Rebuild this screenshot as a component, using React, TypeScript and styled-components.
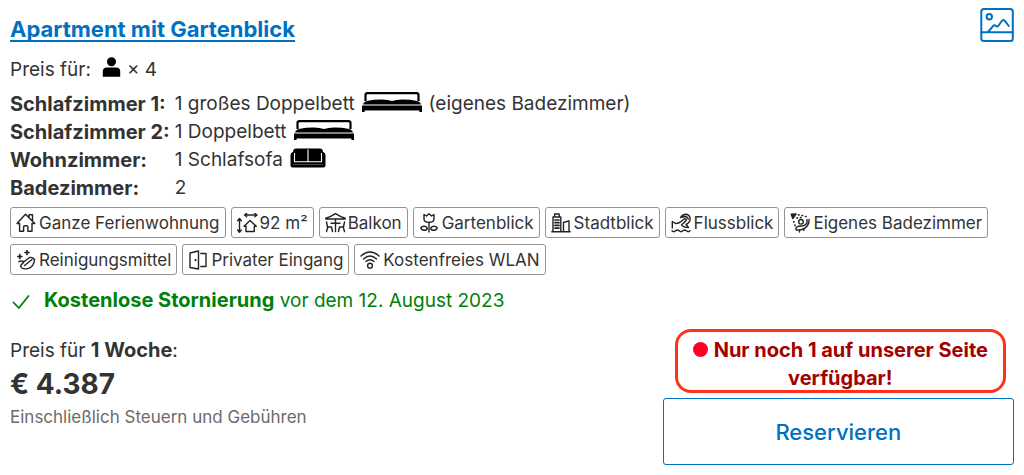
import React from "react";
import styled, { createGlobalStyle } from "styled-components";

const GlobalStyle = createGlobalStyle`
  *, *::before, *::after { box-sizing: border-box; }
  body {
    margin: 0;
    background: #fff;
    color: #333;
    font-family: Inter, "Liberation Sans", sans-serif;
    font-size: 19px;
    line-height: 28px;
  }
  strong { font-size: 20px; line-height: 24px; }
`;

const Card = styled.main`
  padding: 8px 10px;
`;

const Header = styled.header`
  display: flex;
  justify-content: space-between;
  align-items: flex-start;
  height: 42px;
`;

const Title = styled.h1`
  margin: 0;
  padding-top: 5px;
  font-size: 22px;
  line-height: 32px;
  font-weight: 700;
`;

const TitleLink = styled.a`
  color: #0071c2;
  text-decoration: underline;
  text-decoration-thickness: 2px;
  text-underline-offset: 3px;
  text-decoration-skip-ink: none;
`;

const PhotoButton = styled.button`
  display: block;
  padding: 0;
  border: 0;
  background: none;
  cursor: pointer;
  svg { display: block; }
`;

const Occupancy = styled.p`
  display: flex;
  align-items: center;
  margin: 6px 0;
`;

const PersonIcon = styled.svg`
  margin: 0 6px 6px 11px;
`;

const Rooms = styled.table`
  border-collapse: collapse;
  th, td {
    padding: 0;
    height: 28px;
    text-align: left;
    white-space: nowrap;
  }
  th {
    min-width: 164px;
    padding-right: 5px;
    font-size: 20px;
    line-height: 26px;
    font-weight: 700;
  }
`;

const RoomLine = styled.span`
  display: flex;
  align-items: center;
  gap: 7px;
  svg { margin-bottom: 4px; }
`;

const Facilities = styled.ul`
  display: flex;
  flex-wrap: wrap;
  gap: 6px 5px;
  margin: 5px 0 0;
  padding: 0;
  list-style: none;
`;

const Facility = styled.li`
  display: flex;
  align-items: center;
  gap: 2px;
  height: 31px;
  padding: 0 5px;
  border: 1px solid #949494;
  border-radius: 3px;
  font-size: 17px;
  white-space: nowrap;
`;

const LineIcon = styled.svg`
  flex: none;
  fill: none;
  stroke: #222;
  stroke-width: 1.4;
  stroke-linecap: round;
  stroke-linejoin: round;
`;

const Cancellation = styled.p`
  display: flex;
  align-items: center;
  gap: 12px;
  margin: 12px 0 22px;
  color: #008009;
`;

const Footer = styled.footer`
  display: flex;
  justify-content: space-between;
  align-items: flex-start;
`;

const PriceBlock = styled.div`
  p { margin: 0; }
`;

const Price = styled.p`
  font-size: 28px;
  line-height: 38px;
  font-weight: 700;
`;

const TaxNote = styled.p`
  color: #6b6b6b;
  font-size: 17px;
`;

const Booking = styled.div`
  width: 35%;
`;

const Scarcity = styled.p`
  margin: -8px 8px 5px 12px;
  padding: 4px 12px 0;
  height: 64px;
  border: 3px solid #ff3118;
  border-radius: 16px;
  color: #a30000;
  font-size: 20px;
  font-weight: 700;
  text-align: center;
`;

const Dot = styled.span`
  display: inline-block;
  width: 15px;
  height: 15px;
  margin-right: 6px;
  border-radius: 50%;
  background: #ff0028;
`;

const ReserveButton = styled.button`
  display: block;
  width: 100%;
  height: 67px;
  border: 1px solid #0071c2;
  border-radius: 3px;
  background: #fff;
  color: #0071c2;
  font: 500 22px Inter, "Liberation Sans", sans-serif;
  cursor: pointer;
`;

const Bed = () => (
  <svg width="60" height="20" viewBox="0 0 60 20" aria-hidden="true">
    <path d="M3.500 9V3Q3.500 1.200 5.500 1.200H54.500Q56.500 1.200 56.500 3V9" fill="none" stroke="#000" strokeWidth="2.200" />
    <path d="M1 12.600Q1.500 9.500 6 8.700Q12 7.600 19 7.500Q25 7.300 30 9Q35 7.300 41 7.500Q48 7.600 54 8.700Q58.500 9.500 59 12.600Z" />
    <path d="M0 13.600H60V20H57.400V18.400H2.600V20H0Z" />
  </svg>
);

const Sofa = () => (
  <svg width="36" height="20" viewBox="0 0 36 20" aria-hidden="true">
    <path d="M3 4Q3 .5 6 .5H30Q33 .5 33 4Q35.500 4.500 35.500 7V17.500Q35.500 19.500 33.500 19.500H2.500Q.5 19.500 .5 17.500V7Q.5 4.500 3 4Z" />
    <path d="M4.500 5V13.700H31.500V5M18 1.500V13.700" fill="none" stroke="#fff" strokeWidth="1.100" />
    <path d="M3 16.500H33" fill="none" stroke="#777" strokeWidth=".6" />
  </svg>
);

const drawings: Record<string, React.ReactNode> = {
  house: (
    <path d="M1 10.500 9.500 1.300 18.800 10.500M1 10.500H3.600V18.300H7.600V14Q7.600 12.800 8.800 12.800H10.700Q11.900 12.800 11.900 14V18.300H16V10.500H18.800M13 4.500V1.800H16.500V8" />
  ),
  area: (
    <>
      <path d="M8 2H19M9.700.3 7.500 2 9.700 3.700M17.800.3 20 2 17.800 3.700M2.500 6V18.500M.7 7.700 2.500 5.500 4.300 7.700M.7 17 2.500 19.200 4.300 17" />
      <path d="M7 13.300 13 7.500 19.300 13.300H17.300V18.500H9V13.300Z" />
    </>
  ),
  balcony: (
    <path d="M.8 5.200Q5 4.300 10.500.7Q16 4.300 20.200 5.200V6H.8ZM10.500 6V18.500M6 10.200H15M1.500 9 2.500 14H6.500L7.500 18.500M2.800 14 1.500 18.500M19.500 9 18.500 14H14.500L13.500 18.500M18.200 14 19.500 18.500" />
  ),
  flower: (
    <path d="M5 1.500 7.500 3 10 .8 12.500 3 15 1.500V6Q15 9.300 10 9.300Q5 9.300 5 6ZM10 9.300V19M8.300 15.300Q8 17.300 5 17.300Q2.500 17.300 1.800 14.800Q3.500 13 5.500 13.300Q7.500 13.500 8.300 15.300ZM11.700 15.300Q12 17.300 15 17.300Q17.500 17.300 18.200 14.800Q16.500 13 14.500 13.300Q12.500 13.500 11.700 15.300Z" />
  ),
  city: (
    <>
      <path d="M.8 18.800H19.200M2 18.500V4H9.800V18.500M3.600 4V1H8.200V4M12.500 18.500V9.500L18 7.800V18.500" />
      <path d="M4 7H8M4 9.700H8M4 12.400H8M4 15.100H8" strokeWidth="1.700" />
    </>
  ),
  river: (
    <>
      <path d="M1.300 15V8.500L4.500 10.500Q8 10.500 10 8.500L13.500 5.800Q15.500 5.500 15.300 7.300Q13.500 9.500 10.500 11.800Q12.500 14.500 17.500 14.500L15 11.500Q19 9.500 19.200 6Q19 1.800 15 1.300Q11.500 1.300 9.500 4.500L13.500 3.500Q16.500 3.500 17.300 6" />
      <path d="M1 17.800Q2.800 19.500 4.600 17.800T8.200 17.800T11.800 17.800T15.400 17.800T19 17.800" />
    </>
  ),
  bath: (
    <>
      <path d="M1.200 1.300 6 1 2.800 5.500Z" fill="#222" />
      <path d="M8.500 1.800H9M12 2.500H12.500M15.500 3.500H16M3.800 8.500V9M5 12V12.500M7 4.800 7.300 5.100M10.500 4.500H11" strokeWidth="1.700" />
      <circle cx="11" cy="8.800" r="2.300" />
      <path d="M17 6.500V9.500Q15.500 13 11.500 13Q8 13 6.500 14.200Q5.300 15.500 6.200 17H9.500Q14.500 16.500 17.500 12.500Q19.500 9.500 19 6.500M9.500 17V19M13.800 15.800V17.500" />
    </>
  ),
  clean: (
    <>
      <path d="M11 .5V4.500M9 2.500H13M3.800 4.500V8.500M1.800 6.500H5.800" strokeWidth="1.700" />
      <path d="M3 11.500Q7 10.200 7.500 12Q7.500 13.200 5 14.800M7 12.500 13.500 7.500Q16.800 7 18.500 9.500M18.500 9.500Q18 16.500 12.500 18.300Q6.500 20 4.500 16.500Q4.800 14.200 7.500 12.500M8.500 15.500 16 9.500" />
    </>
  ),
  door: (
    <>
      <path d="M2 3 10.500 1V19L2 17.500ZM12.800 3.500H18V16.500H12.800" />
      <path d="M7.500 10.100V10.200" strokeWidth="2" />
    </>
  ),
  wifi: (
    <>
      <path d="M1 6Q10-1.800 19 6M3.500 9Q10 3.200 16.500 9M6 11.500Q10 7.800 14 11.500" />
      <circle cx="10" cy="15.700" r="2.400" />
    </>
  ),
};

const facilities = [
  { icon: "house", label: "Ganze Ferienwohnung" },
  { icon: "area", label: "92 m²" },
  { icon: "balcony", label: "Balkon" },
  { icon: "flower", label: "Gartenblick" },
  { icon: "city", label: "Stadtblick" },
  { icon: "river", label: "Flussblick" },
  { icon: "bath", label: "Eigenes Badezimmer" },
  { icon: "clean", label: "Reinigungsmittel" },
  { icon: "door", label: "Privater Eingang" },
  { icon: "wifi", label: "Kostenfreies WLAN" },
];

const rooms = [
  { name: "Schlafzimmer 1:", text: "1 großes Doppelbett", icon: <Bed />, note: "(eigenes Badezimmer)" },
  { name: "Schlafzimmer 2:", text: "1 Doppelbett", icon: <Bed /> },
  { name: "Wohnzimmer:", text: "1 Schlafsofa", icon: <Sofa /> },
  { name: "Badezimmer:", text: "2" },
];

export default function App() {
  return (
    <>
      <GlobalStyle />
      <Card>
        <Header>
          <Title>
            <TitleLink href="#apartment">Apartment mit Gartenblick</TitleLink>
          </Title>
          <PhotoButton type="button" aria-label="Fotos">
            <svg width="34" height="34" viewBox="0 0 34 34" fill="none" stroke="#0071c2" strokeWidth="2" strokeLinecap="round" strokeLinejoin="round">
              <rect x="1.300" y="1" width="31.500" height="32" rx="2.500" />
              <path d="M1.300 24.300H32.800M8 24 13 18.200Q14.500 16.500 16 18Q17.500 19.300 18.800 17.200L21.500 13.300Q23.500 10.800 25.300 13.300L28.800 18" />
              <circle cx="9.300" cy="8.700" r="2.700" />
            </svg>
          </PhotoButton>
        </Header>

        <Occupancy>
          Preis für:
          <PersonIcon width="19" height="20" viewBox="0 0 19 20" aria-hidden="true">
            <circle cx="9.500" cy="4.700" r="4.500" />
            <path d="M.8 19.800V14.500Q.8 10.500 5 10.500H14Q18.200 10.500 18.200 14.500V19.800Z" />
          </PersonIcon>
          × 4
        </Occupancy>

        <Rooms>
          <tbody>
            {rooms.map((room) => (
              <tr key={room.name}>
                <th scope="row">{room.name}</th>
                <td>
                  <RoomLine>
                    {room.text}
                    {room.icon}
                    {room.note}
                  </RoomLine>
                </td>
              </tr>
            ))}
          </tbody>
        </Rooms>

        <Facilities>
          {facilities.map(({ icon, label }) => (
            <Facility key={label}>
              <LineIcon width="21" height="20" viewBox="0 0 21 20" aria-hidden="true">
                {drawings[icon]}
              </LineIcon>
              {label}
            </Facility>
          ))}
        </Facilities>

        <Cancellation>
          <svg width="22" height="20" viewBox="0 0 22 20" fill="none" stroke="#008009" strokeWidth="1.800" strokeLinecap="round" strokeLinejoin="round" aria-hidden="true">
            <path d="M3.500 11.500 8.800 17 18.500 5" />
          </svg>
          <span>
            <strong>Kostenlose Stornierung</strong> vor dem 12. August 2023
          </span>
        </Cancellation>

        <Footer>
          <PriceBlock>
            <p>
              Preis für <strong>1 Woche</strong>:
            </p>
            <Price>€ 4.387</Price>
            <TaxNote>Einschließlich Steuern und Gebühren</TaxNote>
          </PriceBlock>
          <Booking>
            <Scarcity>
              <Dot />
              Nur noch 1 auf unserer Seite verfügbar!
            </Scarcity>
            <ReserveButton type="button">Reservieren</ReserveButton>
          </Booking>
        </Footer>
      </Card>
    </>
  );
}
